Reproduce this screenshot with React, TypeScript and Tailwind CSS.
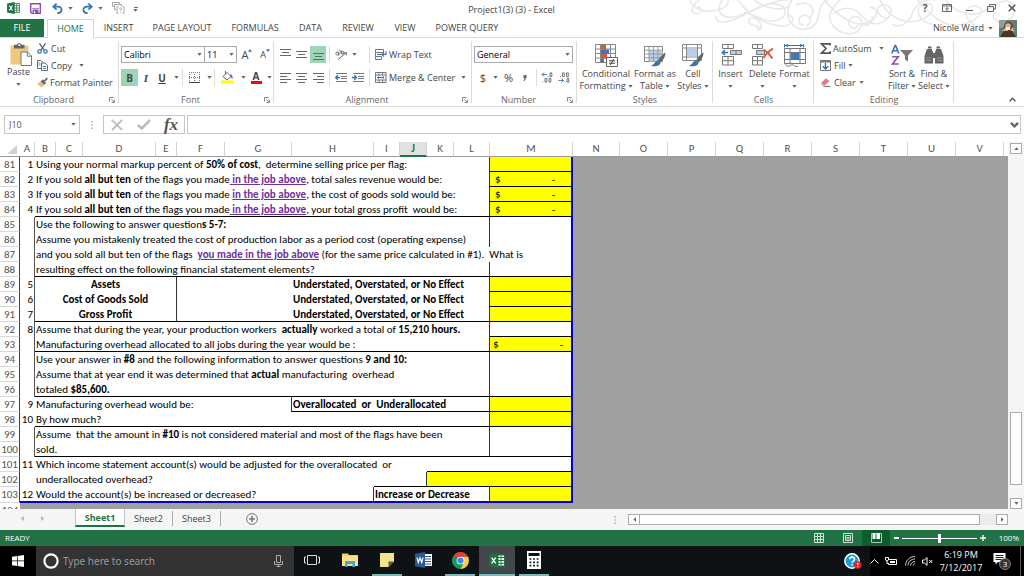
import type { ReactNode } from 'react';

/* ---------- shared pieces ---------- */

function Caret({ className = 'text-[#666]' }: { className?: string }) {
  return (
    <svg viewBox="0 0 5 3" className={`h-[3px] w-[5px] shrink-0 ${className}`} aria-hidden="true">
      <path d="M0.3 0h4.4L2.5 2.7z" fill="currentColor" />
    </svg>
  );
}

function Divider() {
  return <span className="h-[17px] w-px shrink-0 bg-[#dcdcdc]" />;
}

function Slot({ w, label, active, children }: { w: string; label: string; active?: boolean; children: ReactNode }) {
  return (
    <button
      type="button"
      aria-label={label}
      className={`flex h-[17px] shrink-0 items-center justify-center ${w} ${active ? 'bg-[#9fd5b7]' : ''}`}
    >
      {children}
    </button>
  );
}

function Group({ w, label, launcher, children }: { w: string; label: string; launcher?: boolean; children: ReactNode }) {
  return (
    <section className={`relative flex shrink-0 flex-col ${w}`} aria-label={label}>
      <div className="flex-1">{children}</div>
      <div className={`flex h-3 items-center justify-center text-[#666] ${launcher ? 'pr-3' : ''}`}>{label}</div>
      {launcher && (
        <button type="button" aria-label={`${label} settings`} className="absolute right-1 bottom-[3px]">
          <svg viewBox="0 0 6 6" className="h-[6px] w-[6px]" fill="none" stroke="#777" strokeWidth="0.9">
            <path d="M0.5 4.5v-4h4M2.3 2.3l3 3M5.4 2.6v2.9H2.6" />
          </svg>
        </button>
      )}
      <span className="absolute top-[3px] right-0 bottom-[3px] w-px bg-[#dcdcdc]" />
    </section>
  );
}

function BigButton({ w, icon, lines, caretBelow }: { w: string; icon: ReactNode; lines: string[]; caretBelow?: boolean }) {
  return (
    <button type="button" className={`flex shrink-0 flex-col items-center whitespace-nowrap ${w}`}>
      <span className="flex h-[26px] items-center justify-center">{icon}</span>
      {lines.map((line, i) => (
        <span key={line} className="flex items-center gap-[2px] leading-3">
          {line}
          {!caretBelow && i === lines.length - 1 && <Caret />}
        </span>
      ))}
      {caretBelow && (
        <span className="flex h-3 items-center">
          <Caret />
        </span>
      )}
    </button>
  );
}

/* ---------- title bar ---------- */

function ExcelLogo({ className }: { className: string }) {
  return (
    <svg viewBox="0 0 16 15" className={className} aria-hidden="true">
      <rect x="8" y="2" width="7.5" height="11" fill="#fff" stroke="#217346" strokeWidth="1" />
      <path d="M9 4.5h6M9 7.5h6M9 10.3h6M12 2.5v10" stroke="#217346" strokeWidth="1" />
      <path d="M0 1.8L9.5 0v15L0 13.2z" fill="#1e7145" />
      <path d="M2.7 4.6l4 5.8M6.7 4.6l-4 5.8" stroke="#fff" strokeWidth="1.4" />
    </svg>
  );
}

function Flourish() {
  return (
    <svg
      viewBox="0 0 340 37"
      className="pointer-events-none absolute top-0 right-0 h-[37px] w-[340px]"
      fill="none"
      stroke="#e8e8e8"
      strokeWidth="1.6"
      aria-hidden="true"
    >
      <path d="M15 0c-8 7-9 14-2 14 6 0 5-8 0-7" />
      <path d="M6 0c2 8 14 14 28 10C46 7 44 0 44 0" />
      <path d="M38 0C30 14 40 22 60 14S96-2 108 0" />
      <path d="M32 16c0 9 12 7 26 0S80 2 92 4s12 12 2 16-20-4-34-8" />
      <path d="M54 0c10 14 24 24 42 26 14 1 16-10 8-11" />
      <path d="M70 0C82 8 96 12 106 6M78 29c-6-5-14-3-13-9s12 0 12 6-5 4-4 1" />
      <path d="M108 0c-12 18 4 34 18 28s4-24 18-28" />
      <path d="M120 25c-6 0-7-7-2-9 7-3 12 6 4 10M112 5c14-6 22 6 14 12" />
      <path d="M156 0c-8 8-14 16-8 24 5 8 14 11 22 9s10-14 4-16-12 4-8 9 9 1 7-2" />
      <path d="M150 14c8-8 20-8 28 2s18 10 26 2c8-10-2-16-8-12s0 12 8 12" />
      <path d="M140 0c16 18 34 30 48 20 8-6 4-14-2-12" />
      <path d="M196 0c6 14 22 26 40 20S250 0 240 4s-6 18 8 20M208 24c4 4 16 2 20-10S244-2 252 0" />
      <path d="M176 24c8 4 14-2 12-8M234 0c12 14 26 30 46 24s22-18 10-18-10 14 2 20" />
      <path d="M262 0c6 10 22 18 36 12S318-2 326 2s4 18-6 20-14-8-8-10" />
    </svg>
  );
}

function TitleBar() {
  return (
    <header className="relative flex h-[19px] items-center">
      <div className="flex flex-1 items-center pb-[3px] pl-[7px]">
        <ExcelLogo className="h-3 w-[13px]" />
        <button type="button" aria-label="Save" className="ml-[10px]">
          <svg viewBox="0 0 11 11" className="h-[11px] w-[11px]">
            <path d="M0.7 0.7h9.6v9.6H1.9L0.7 9z" fill="#fff" stroke="#8a4fb0" strokeWidth="1.4" />
            <path d="M2 5.7h7M3 7h5v3.5H3z" fill="#8a4fb0" stroke="#8a4fb0" strokeWidth="0.8" />
            <path d="M3.8 8.2h1.4v2H3.8z" fill="#fff" />
          </svg>
        </button>
        <button type="button" aria-label="Undo" className="ml-[11px]">
          <svg viewBox="0 0 11 11" className="h-[11px] w-[11px]" fill="none" stroke="#3472b5" strokeWidth="1.7">
            <path d="M4.6 0.6L1.2 3.7l3.4 3M1.2 3.7h4.6c5.2 0 5 6.3-0.4 6.5" />
          </svg>
        </button>
        <button type="button" aria-label="Undo history" className="ml-1 p-px">
          <Caret />
        </button>
        <button type="button" aria-label="Redo" className="ml-2">
          <svg viewBox="0 0 11 11" className="h-[11px] w-[11px]" fill="none" stroke="#3472b5" strokeWidth="1.7">
            <path d="M6.4 0.6l3.4 3.1-3.4 3M9.8 3.7H5.2c-5.2 0-5 6.3 0.4 6.5" />
          </svg>
        </button>
        <button type="button" aria-label="Redo history" className="ml-1 p-px">
          <Caret />
        </button>
        <button type="button" aria-label="Paste special" className="ml-2">
          <svg viewBox="0 0 13 12" className="h-3 w-[13px]" fill="none" stroke="#a8a8a8" strokeWidth="1">
            <path d="M0.5 0.5h7v2M0.5 0.5v4h2M2.5 2.5h7v2M2.5 2.5v5h2" />
            <path d="M6.5 4.8H5v6.5h1.5M10.5 4.8H12v6.5h-1.5M7.5 7c0-1.5 2-1.3 2 0 0 1-1 0.8-1 1.8M8.5 10v0.8" />
          </svg>
        </button>
        <button type="button" aria-label="Customize toolbar" className="mt-[3px] ml-2 flex flex-col items-center gap-px">
          <span className="h-px w-[4px] bg-[#666]" />
          <Caret />
        </button>
      </div>
      <h1 className="text-[9px] text-[#444]">Project1(3) (3) - Excel</h1>
      <div className="relative flex flex-1 items-center justify-end pr-2 pb-[3px] text-[#555]">
        <button type="button" aria-label="Help" className="w-[22px] text-center text-[10px] leading-[10px] font-bold">
          ?
        </button>
        <button type="button" aria-label="Ribbon display options" className="flex w-[22px] justify-center">
          <svg viewBox="0 0 10 8" className="h-2 w-[10px]" fill="none" stroke="#666" strokeWidth="1">
            <path d="M0.5 0.5h9v7h-9zM0.5 2h9M5 7V4M3.3 5.2L5 3.6l1.7 1.6" />
          </svg>
        </button>
        <button type="button" aria-label="Minimize" className="flex w-[22px] justify-center pt-1">
          <span className="block h-px w-[7px] bg-[#555]" />
        </button>
        <button type="button" aria-label="Restore" className="flex w-[22px] justify-center">
          <svg viewBox="0 0 9 8" className="h-2 w-[9px]" fill="none" stroke="#666" strokeWidth="1">
            <path d="M2.5 2.5v-2h6v4.5h-2M0.5 2.5h6v5h-6z" />
          </svg>
        </button>
        <button type="button" aria-label="Close" className="ml-[6px]">
          <svg viewBox="0 0 8 8" className="h-2 w-2" fill="none" stroke="#555" strokeWidth="1.5">
            <path d="M0.7 0.7l6.6 6.6M7.3 0.7L0.7 7.3" />
          </svg>
        </button>
      </div>
    </header>
  );
}

const ribbonTabs = [
  { name: 'INSERT', w: 'w-[49px]' },
  { name: 'PAGE LAYOUT', w: 'w-[78px]' },
  { name: 'FORMULAS', w: 'w-[68px]' },
  { name: 'DATA', w: 'w-[43px]' },
  { name: 'REVIEW', w: 'w-[52px]' },
  { name: 'VIEW', w: 'w-[42px]' },
  { name: 'POWER QUERY', w: 'w-[82px]' },
];

function TabRow() {
  return (
    <nav className="relative flex h-[18px] text-[9px] text-[#444]">
      <button type="button" className="w-11 bg-[#217346] text-white">
        FILE
      </button>
      <button
        type="button"
        className="relative z-10 -mb-px ml-[3px] w-[47px] border-x border-t border-[#d4d4d4] bg-white text-[#217346]"
      >
        HOME
      </button>
      {ribbonTabs.map((tab) => (
        <button key={tab.name} type="button" className={`whitespace-nowrap ${tab.w}`}>
          {tab.name}
        </button>
      ))}
      <button type="button" className="ml-auto flex items-center gap-1 pr-[7px]">
        Nicole Ward
        <Caret />
        <svg viewBox="0 0 18 17" className="ml-[2px] h-[17px] w-[18px]" aria-hidden="true">
          <rect width="18" height="17" fill="#5d7f78" />
          <path d="M0 0h7v5L3 8H0z" fill="#86a39a" />
          <path d="M5 6c0-5 8-6 9 0l1 6H4z" fill="#6b4530" />
          <circle cx="9" cy="6" r="2.8" fill="#d9b49a" />
          <path d="M1 17l3-5 4-2 5 1 4 6z" fill="#4a352d" />
          <path d="M3 11l4-4 2 4zM11 10l3-3 1.5 5z" fill="#d9b49a" />
          <rect x="7" y="7" width="4" height="3" fill="#f3efe9" />
        </svg>
      </button>
    </nav>
  );
}

/* ---------- ribbon ---------- */

function ClipboardGroup() {
  return (
    <Group w="w-[119px]" label="Clipboard" launcher>
      <div className="flex">
        <button type="button" className="flex w-[37px] flex-col items-center pt-[5px]">
          <svg viewBox="0 0 22 23" className="ml-[4px] h-[23px] w-[22px]">
            <rect x="0.5" y="2.5" width="18" height="19" fill="#edc87e" />
            <path d="M4 1.8h3C7-0.2 11.5-0.2 11.5 1.8h3V5.5H4z" fill="#666" />
            <rect x="8.3" y="1.3" width="2" height="1.6" fill="#fff" />
            <path d="M11 9h6.5l4 4v9.5H11z" fill="#fff" stroke="#777" />
            <path d="M17.3 9v4.2h4.2" fill="none" stroke="#777" />
          </svg>
          <span className="leading-3">Paste</span>
          <span className="flex h-3 items-center">
            <Caret />
          </span>
        </button>
        <div className="flex flex-col pt-[2px]">
          <button type="button" className="flex h-[17px] items-center gap-[3px]">
            <svg viewBox="0 0 11 11" className="h-[11px] w-[11px]" fill="none">
              <path d="M2.5 0.3l4.7 7M8.5 0.3L3.8 7.3" stroke="#666" strokeWidth="1.3" />
              <circle cx="2.5" cy="8.5" r="1.7" stroke="#3472b5" strokeWidth="1.2" />
              <circle cx="8.5" cy="8.5" r="1.7" stroke="#3472b5" strokeWidth="1.2" />
            </svg>
            Cut
          </button>
          <button type="button" className="flex h-[17px] items-center gap-[3px]">
            <svg viewBox="0 0 11 11" className="h-[11px] w-[11px]" fill="#fff" stroke="#666">
              <path d="M0.5 0.5H4l2 2v6H0.5z" />
              <path d="M4.5 3H8l2.5 2.3v5.2h-6z" />
              <path d="M1.5 3h2M1.5 5h2M6 6.5h3M6 8.5h3" stroke="#3472b5" strokeWidth="0.9" />
            </svg>
            Copy
            <span className="pl-1">
              <Caret />
            </span>
          </button>
          <button type="button" className="flex h-[17px] items-center gap-[2px] whitespace-nowrap">
            <svg viewBox="0 0 12 11" className="h-[11px] w-[11px]">
              <path d="M0 6.5L4.5 4l4 4.5L4.5 11z" fill="#edc087" />
              <path d="M4 4.5L6.5 2l3.5 4-2.3 2z" fill="#666" />
              <path d="M7.5 3.5L10.5 0l1.5 1.5-3 3z" fill="#666" />
            </svg>
            Format Painter
          </button>
        </div>
      </div>
    </Group>
  );
}

function FontGroup() {
  return (
    <Group w="w-[155px]" label="Font" launcher>
      <div className="flex items-center pt-2 pl-[2px]">
        <label className="relative flex">
          <select
            aria-label="Font name"
            className="h-[17px] w-[84px] appearance-none border border-[#ababab] bg-white pl-[2px] text-black"
          >
            <option>Calibri</option>
          </select>
          <span className="pointer-events-none absolute top-[7px] right-[3px]">
            <Caret />
          </span>
        </label>
        <label className="relative -ml-px flex">
          <select
            aria-label="Font size"
            className="h-[17px] w-[33px] appearance-none border border-[#ababab] bg-white pl-[2px] text-black"
          >
            <option>11</option>
          </select>
          <span className="pointer-events-none absolute top-[7px] right-[3px]">
            <Caret />
          </span>
        </label>
        <Slot w="w-[20px]" label="Increase font size">
          <span className="text-[11px]">A</span>
          <svg viewBox="0 0 4 3" className="-mt-2 h-[3px] w-1">
            <path d="M0 2.8h4L2 0z" fill="#3472b5" />
          </svg>
        </Slot>
        <Slot w="w-[16px]" label="Decrease font size">
          <span className="text-[9px]">A</span>
          <svg viewBox="0 0 4 3" className="-mt-2 h-[3px] w-1">
            <path d="M0 0.2h4L2 3z" fill="#3472b5" />
          </svg>
        </Slot>
      </div>
      <div className="flex items-center pt-[6px] pl-[2px]">
        <Slot w="w-[17px]" label="Bold" active>
          <b className="text-[10px]">B</b>
        </Slot>
        <Slot w="w-[16px]" label="Italic">
          <i className="font-['Liberation_Serif',serif] text-[11px] font-bold">I</i>
        </Slot>
        <Slot w="w-[16px]" label="Underline">
          <span className="text-[10px] font-bold underline">U</span>
        </Slot>
        <Slot w="w-[12px]" label="Underline styles">
          <Caret />
        </Slot>
        <Divider />
        <Slot w="w-[22px]" label="Borders">
          <svg viewBox="0 0 11 11" className="h-[11px] w-[11px]" stroke="#777" fill="none">
            <path d="M0 0.5h11M0 5.5h11M0.5 2v8M5.5 2v8M10.5 2v8" strokeDasharray="1 1" />
            <path d="M0 10.5h11" stroke="#444" />
          </svg>
        </Slot>
        <Slot w="w-[9px]" label="Border styles">
          <Caret />
        </Slot>
        <Divider />
        <Slot w="w-[24px]" label="Fill color">
          <svg viewBox="0 0 13 13" className="h-[13px] w-[13px]">
            <path d="M2 5.5l4-4 4 4-4 3.5z" fill="#fff" stroke="#666" />
            <path d="M4.5 0v3" stroke="#666" />
            <path d="M9 3.5c2-0.5 3 1.5 2.500 4.500-1.500 0-1-2.500-2-3z" fill="#3472b5" />
            <rect x="0" y="9.500" width="13" height="3.200" fill="#ff0" />
          </svg>
        </Slot>
        <Slot w="w-[8px]" label="Fill color choices">
          <Caret />
        </Slot>
        <Slot w="w-[18px]" label="Font color">
          <span className="flex w-[11px] flex-col items-center border-b-[3px] border-[#f00] text-[10px] leading-[10px] font-bold">
            A
          </span>
        </Slot>
        <Slot w="w-[8px]" label="Font color choices">
          <Caret />
        </Slot>
      </div>
    </Group>
  );
}

function LinesIcon({ d }: { d: string }) {
  return (
    <svg viewBox="0 0 11 11" className="h-[11px] w-[11px]" fill="none" stroke="#666">
      <path d={d} />
    </svg>
  );
}

function IndentIcon({ arrow }: { arrow: string }) {
  return (
    <svg viewBox="0 0 12 9" className="h-[9px] w-3" fill="none">
      <path d="M1 0.5h11M6 3.5h6M6 5.5h6M1 8.5h11" stroke="#777" />
      <path d={arrow} stroke="#3472b5" strokeWidth="1.3" />
    </svg>
  );
}

function AlignmentGroup() {
  return (
    <Group w="w-[198px]" label="Alignment" launcher>
      <div className="flex items-center pt-2 pl-[3px]">
        <Slot w="w-4" label="Top align">
          <LinesIcon d="M0 0.5h11M2 3.5h7M0 6.5h11" />
        </Slot>
        <Slot w="w-[17px]" label="Middle align">
          <LinesIcon d="M0 2.5h11M2 5.5h7M0 8.5h11" />
        </Slot>
        <Slot w="w-4" label="Bottom align" active>
          <LinesIcon d="M0 4.5h11M2 7.5h7M0 10.5h11" />
        </Slot>
        <span className="w-[3px]" />
        <Divider />
        <Slot w="w-[22px]" label="Orientation">
          <svg viewBox="0 0 12 11" className="h-[11px] w-3" fill="none" stroke="#666">
            <circle cx="2.5" cy="4.5" r="1.6" />
            <path d="M4 6.5L3 3M4.2 0.5l3.5 4.2" />
            <circle cx="7.3" cy="3.6" r="1.5" />
            <path d="M3 10.5l8-6.5M8.8 3.7h2.5v2.5" />
          </svg>
        </Slot>
        <Caret />
        <span className="w-3" />
        <Divider />
        <button type="button" className="ml-[5px] flex items-center gap-[2px] whitespace-nowrap">
          <svg viewBox="0 0 12 11" className="h-[11px] w-3" fill="none">
            <path d="M0.5 0.5h8v3h-8zM0.5 7.5h6v3h-6zM0.5 3.5v4" stroke="#777" />
            <path d="M2 5.5h9V2.5M9 3.7L7 5.6l2 1.9" stroke="#3472b5" strokeWidth="1.2" />
          </svg>
          Wrap Text
        </button>
      </div>
      <div className="flex items-center pt-[6px] pl-[3px]">
        <Slot w="w-4" label="Align left">
          <LinesIcon d="M0 1.5h11M0 4.5h7M0 7.5h11M0 10.5h7" />
        </Slot>
        <Slot w="w-[17px]" label="Center">
          <LinesIcon d="M0 1.5h11M2 4.5h7M0 7.5h11M2 10.5h7" />
        </Slot>
        <Slot w="w-4" label="Align right">
          <LinesIcon d="M0 1.5h11M4 4.5h7M0 7.5h11M4 10.5h7" />
        </Slot>
        <span className="w-[3px]" />
        <Divider />
        <Slot w="w-[22px]" label="Decrease indent">
          <IndentIcon arrow="M5 4.5H0.7M2.8 2.3L0.6 4.5l2.2 2.2" />
        </Slot>
        <Slot w="w-3" label="Increase indent">
          <IndentIcon arrow="M0 4.5h4.3M2.3 2.3l2.2 2.2-2.2 2.2" />
        </Slot>
        <span className="w-[5px]" />
        <Divider />
        <button type="button" className="ml-[5px] flex items-center gap-[2px] whitespace-nowrap">
          <svg viewBox="0 0 12 11" className="h-[11px] w-3" fill="none">
            <path d="M0.5 0.5h10.5v10H0.5zM0.5 3h10.5M0.5 8h10.5M4 0.5V3M7.5 0.5V3M4 8v2.5M7.5 8v2.5" stroke="#777" />
            <path d="M2.5 5.5h6.5M3.7 4.3L2.4 5.5l1.3 1.2M7.8 4.3l1.3 1.2-1.3 1.2" stroke="#3472b5" />
          </svg>
          Merge &amp; Center
          <span className="pl-1">
            <Caret />
          </span>
        </button>
      </div>
    </Group>
  );
}

function NumberGroup() {
  return (
    <Group w="w-[105px]" label="Number" launcher>
      <div className="flex pt-2 pr-1 pl-[2px]">
        <label className="relative flex flex-1">
          <select
            aria-label="Number format"
            className="h-[17px] w-full appearance-none border border-[#ababab] bg-white pl-[2px] text-black"
          >
            <option>General</option>
          </select>
          <span className="pointer-events-none absolute top-[7px] right-[3px]">
            <Caret />
          </span>
        </label>
      </div>
      <div className="flex items-center pt-[6px] pl-[3px]">
        <Slot w="w-4" label="Accounting format">
          <span className="text-[11px]">$</span>
        </Slot>
        <Slot w="w-[9px]" label="Currency choices">
          <Caret />
        </Slot>
        <Slot w="w-[17px]" label="Percent style">
          <span className="text-[11px]">%</span>
        </Slot>
        <Slot w="w-4" label="Comma style">
          <svg viewBox="0 0 4 6" className="h-[6px] w-1" fill="#666">
            <path d="M0.5 0h3v2.5L1.5 6H0.5L1.5 3h-1z" />
          </svg>
        </Slot>
        <span className="w-[3px]" />
        <Divider />
        <Slot w="w-[20px]" label="Increase decimal">
          <svg viewBox="0 0 12 11" className="h-[11px] w-3" fill="none" stroke="#666" strokeWidth="0.9">
            <path d="M6 2.5H1M3 0.5L1 2.5l2 2" stroke="#3472b5" />
            <path d="M7 4.2v0.8M9 0.9h1.8v3.7H9zM2 9.5v0.8M4 6.4h1.8v3.7H4zM8 6.4h1.8v3.7H8z" />
          </svg>
        </Slot>
        <Slot w="w-[14px]" label="Decrease decimal">
          <svg viewBox="0 0 12 11" className="h-[11px] w-3" fill="none" stroke="#666" strokeWidth="0.9">
            <path d="M0.5 8.5h5M3.5 6.5l2 2-2 2" stroke="#3472b5" />
            <path d="M2.5 4.2v0.8M4.5 0.9h1.8v3.7H4.5zM8.5 0.9h1.8v3.7H8.5zM7 9.5v0.8M9 6.4h1.8v3.7H9z" />
          </svg>
        </Slot>
      </div>
    </Group>
  );
}

const brush = (
  <>
    <path d="M21.5 8.5c-3 1.5-6 5-7.5 8l2.5 2c2.5-2 5-6 5-10z" fill="#666" />
    <path d="M14 16.5c-3 0.5-3.5 4-7 5.2 3.5 1.3 9 0.8 9.5-3.2z" fill="#3472b5" />
  </>
);

function StylesGroup() {
  return (
    <Group w="w-[136px]" label="Styles">
      <div className="flex pt-1">
        <BigButton
          w="w-[58px]"
          lines={['Conditional', 'Formatting']}
          icon={
            <svg viewBox="0 0 23 23" className="h-[23px] w-[23px]">
              <path d="M0.5 0.5h20v18h-20zM5.5 0.5v18M15.5 0.5v18M0.5 5h20M0.5 9.5h20M0.5 14h20" fill="#fff" stroke="#888" />
              <rect x="6" y="1" width="5" height="4.5" fill="#d9583b" />
              <rect x="6" y="5.5" width="8" height="4.5" fill="#3f77b9" />
              <rect x="6" y="10" width="6" height="4.5" fill="#d9583b" />
              <rect x="6" y="14.5" width="3" height="4" fill="#3f77b9" />
              <path d="M11.5 13.5h11v9h-11z" fill="#fff" stroke="#666" />
              <path d="M14 16.8h6M14 19.2h6M18.7 15l-3.4 6" fill="none" stroke="#444" />
            </svg>
          }
        />
        <BigButton
          w="w-[40px]"
          lines={['Format as', 'Table']}
          icon={
            <svg viewBox="0 0 23 23" className="h-[23px] w-[23px]">
              <path d="M0.5 2.5h18v15h-18z" fill="#fff" stroke="#888" />
              <path d="M5 6.5h13.5v11H5z" fill="#b9d0ea" />
              <path d="M5 2.5v15M9.5 2.5v15M14 2.5v15M0.5 6.2h18M0.5 10h18M0.5 13.8h18" stroke="#999" />
              {brush}
            </svg>
          }
        />
        <BigButton
          w="w-[36px]"
          lines={['Cell', 'Styles']}
          icon={
            <svg viewBox="0 0 23 23" className="h-[23px] w-[23px]">
              <path d="M0.5 0.5h19v16h-19zM4.5 0.5v16M15.5 0.5v16M0.5 4h19M0.5 13h19" fill="#fff" stroke="#888" />
              <path d="M5 4.5h10v8H5z" fill="#b9d0ea" />
              {brush}
            </svg>
          }
        />
      </div>
    </Group>
  );
}

function CellsGroup() {
  return (
    <Group w="w-[101px]" label="Cells">
      <div className="flex pt-1 pl-[2px]">
        <BigButton
          w="w-[31px]"
          lines={['Insert']}
          caretBelow
          icon={
            <svg viewBox="0 0 22 22" className="h-[22px] w-[22px]" fill="#fff" stroke="#777">
              <path d="M2.5 0.5h11v4h-11zM8 0.5v4M2.5 12.5h11v8.5h-11zM8 12.5v8.5M2.5 16.7h11" />
              <path d="M10.5 6.5h11v4h-11zM16 6.5v4" fill="#b9d0ea" />
              <path d="M8 8.5H2.5M5 6L2.3 8.5 5 11" fill="none" stroke="#3472b5" strokeWidth="1.5" />
            </svg>
          }
        />
        <BigButton
          w="w-[33px]"
          lines={['Delete']}
          caretBelow
          icon={
            <svg viewBox="0 0 22 22" className="h-[22px] w-[22px]" fill="#fff" stroke="#777">
              <path d="M0.5 0.5h10v4h-10zM5.5 0.5v4M0.5 12.5h10v8.5h-10zM5.5 12.5v8.5M0.5 16.7h10" />
              <path d="M4.5 6.5h8v4h-8z" fill="#b9d0ea" />
              <path d="M11.5 5.5c4 2.5 7 6 9 9M21 4.5c-4 2.5-7.5 6-9.5 9.5" fill="none" stroke="#d9583b" strokeWidth="2" />
            </svg>
          }
        />
        <BigButton
          w="w-[31px]"
          lines={['Format']}
          caretBelow
          icon={
            <svg viewBox="0 0 22 23" className="h-[23px] w-[22px]" fill="#fff" stroke="#777">
              <path d="M0.5 4.5h21v15h-21zM6 4.5v15M16 4.5v15M0.5 8.5h21M0.5 15.5h21" />
              <path d="M6.5 9h9v6.5h-9z" fill="#3f77b9" stroke="none" />
              <path d="M1 19.5c2 4 4 3 6 1.5s4 2.5 7 1.5" fill="none" />
              <path d="M1 1.5h18M0.5 0v3.5M19.5 0v3.5M4 0L2 1.5 4 3M16 0l2 1.5L16 3" fill="none" stroke="#3472b5" />
            </svg>
          }
        />
      </div>
    </Group>
  );
}

function EditingGroup() {
  return (
    <Group w="w-[140px]" label="Editing">
      <div className="flex">
        <div className="flex w-[70px] flex-col pt-[2px] pl-[6px]">
          <button type="button" className="flex h-[17px] items-center gap-[2px]">
            <svg viewBox="0 0 11 11" className="h-[11px] w-[11px]" fill="none" stroke="#555" strokeWidth="1.7">
              <path d="M10 2.5V0.9H1.5l4.5 4.6-4.5 4.6H10.2V8.3" />
            </svg>
            AutoSum
            <span className="ml-auto">
              <Caret />
            </span>
          </button>
          <button type="button" className="flex h-[17px] items-center gap-[3px]">
            <svg viewBox="0 0 11 11" className="h-[11px] w-[11px]" fill="none">
              <path d="M0.5 0.5h10v10h-10z" stroke="#777" />
              <path d="M0.5 1.5h10" stroke="#777" strokeWidth="2" />
              <path d="M5.5 3v6M2.8 6.2L5.5 9l2.7-2.8" stroke="#3472b5" strokeWidth="1.4" />
            </svg>
            Fill
            <Caret />
          </button>
          <button type="button" className="flex h-[17px] items-center gap-[3px]">
            <svg viewBox="0 0 11 11" className="h-[11px] w-[11px]">
              <path d="M1 6l5-4.8L9.5 4 4.5 8.7z" fill="#e8788c" />
              <path d="M1 6l3.5 2.7-1 0.8L0.5 7z" fill="#f3b4be" />
              <path d="M3.5 9.5h7" stroke="#777" />
            </svg>
            Clear
            <Caret />
          </button>
        </div>
        <div className="flex pt-1 pl-[2px]">
          <BigButton
            w="w-8"
            lines={['Sort &', 'Filter']}
            icon={
              <svg viewBox="0 0 22 22" className="h-[22px] w-[22px]" fill="none">
                <path d="M0.8 9.5L4 1.5h0.6l3.2 8M2 6.8h4.7" stroke="#3472b5" strokeWidth="1.6" />
                <path d="M1.2 12.8h6L1.5 20h6.2" stroke="#8a4fb0" strokeWidth="1.6" />
                <path d="M9 6h13l-5 5.5v6l-3-2v-4z" fill="#777" />
              </svg>
            }
          />
          <BigButton
            w="w-8"
            lines={['Find &', 'Select']}
            icon={
              <svg viewBox="0 0 20 18" className="h-[18px] w-5" fill="#666">
                <path d="M3 3h5v1.5l1 1v12H0.5V10zM12 3h5l2.5 7v7.5H11v-12l1-1zM4 0.5h3.5v2H4zM12.5 0.5H16v2h-3.5zM8.5 7h3v5h-3z" />
                <path d="M2 12h5M13 12h5M2.5 14.5H7M13.5 14.5H18" stroke="#aaa" strokeWidth="0.7" />
              </svg>
            }
          />
        </div>
      </div>
    </Group>
  );
}

function Ribbon() {
  return (
    <div className="relative flex h-[70px] border-y border-[#d8d8d8] bg-white text-[9px] leading-3 text-[#444]">
      <ClipboardGroup />
      <FontGroup />
      <AlignmentGroup />
      <NumberGroup />
      <StylesGroup />
      <CellsGroup />
      <EditingGroup />
      <button type="button" aria-label="Collapse ribbon" className="mt-auto mr-2 mb-1 ml-auto">
        <svg viewBox="0 0 7 5" className="h-[5px] w-[7px]" fill="none" stroke="#555" strokeWidth="1.4">
          <path d="M0.6 4.3L3.5 1.2l2.9 3.1" />
        </svg>
      </button>
    </div>
  );
}

function FormulaBar() {
  return (
    <div className="flex h-[35px] items-start pt-2 pr-[3px] pl-1 text-[10px] text-[#444]">
      <label className="relative flex">
        <input
          aria-label="Name box"
          defaultValue="J10"
          className="h-[19px] w-[76px] border border-[#c6c6c6] bg-white pl-1 text-[9px] text-[#555]"
        />
        <span className="absolute top-2 right-1">
          <Caret />
        </span>
      </label>
      <span className="flex h-[19px] w-[23px] items-center justify-center">
        <svg viewBox="0 0 2 8" className="h-2 w-[2px]" fill="#888">
          <path d="M0.5 0h1v1.5h-1zM0.5 3.2h1v1.5h-1zM0.5 6.4h1V8h-1z" />
        </svg>
      </span>
      <div className="flex h-[19px] w-[82px] items-center border border-[#c6c6c6]">
        <button type="button" aria-label="Cancel" className="flex w-[26px] justify-center">
          <svg viewBox="0 0 12 12" className="h-3 w-3" stroke="#bdbdbd" strokeWidth="1.8" fill="none">
            <path d="M0.8 0.8l10.4 10.4M11 1L1 11" />
          </svg>
        </button>
        <button type="button" aria-label="Enter" className="flex w-[28px] justify-center">
          <svg viewBox="0 0 14 11" className="h-[11px] w-[14px]" stroke="#bdbdbd" strokeWidth="2.6" fill="none">
            <path d="M0.8 6l4 3.5L13 1" />
          </svg>
        </button>
        <button
          type="button"
          aria-label="Insert function"
          className="w-[26px] font-['Liberation_Serif',serif] text-[17px] leading-[17px] font-bold text-[#555] italic"
        >
          fx
        </button>
      </div>
      <label className="relative ml-[2px] flex flex-1">
        <input aria-label="Formula" className="h-[19px] w-full border border-[#c6c6c6] bg-white px-1 text-black" />
        <svg viewBox="0 0 9 6" className="absolute top-[7px] right-[2px] h-[6px] w-[9px]" fill="none" stroke="#666" strokeWidth="2.4">
          <path d="M0.9 0.9l3.6 3.4L8.1 0.9" />
        </svg>
      </label>
    </div>
  );
}

/* ---------- worksheet ---------- */

const columns = [
  { id: 'A', w: 'w-[15px]' },
  { id: 'B', w: 'w-[21px]' },
  { id: 'C', w: 'w-[27px]' },
  { id: 'D', w: 'w-[73px]' },
  { id: 'E', w: 'w-[21px]' },
  { id: 'F', w: 'w-[48px]' },
  { id: 'G', w: 'w-[67px]' },
  { id: 'H', w: 'w-[82px]' },
  { id: 'I', w: 'w-[26px]' },
  { id: 'J', w: 'w-[27px]' },
  { id: 'K', w: 'w-[27px]' },
  { id: 'L', w: 'w-[36px]' },
  { id: 'M', w: 'w-[83px]' },
  { id: 'N', w: 'w-[47px]' },
  { id: 'O', w: 'w-[48px]' },
  { id: 'P', w: 'w-[48px]' },
  { id: 'Q', w: 'w-[48px]' },
  { id: 'R', w: 'w-[48px]' },
  { id: 'S', w: 'w-[48px]' },
  { id: 'T', w: 'w-[48px]' },
  { id: 'U', w: 'w-[48px]' },
  { id: 'V', w: 'w-[48px]' },
];

type Cell = {
  span: number;
  body?: ReactNode;
  fill?: boolean;
  bold?: boolean;
  center?: boolean;
  right?: boolean;
  bottom?: boolean;
};

type Row = { n: number; q?: string; box?: boolean; cells: Cell[] };

function Job({ children }: { children: ReactNode }) {
  return (
    <a href="#job" className="font-bold text-[#7030a0] underline">
      {children}
    </a>
  );
}

function Dash({ wide }: { wide?: boolean }) {
  return (
    <span className={`flex justify-between ${wide ? 'pr-[8px] pl-[2px]' : 'pr-4 pl-[4px]'}`}>
      <span>$</span>
      <span>-</span>
    </span>
  );
}

const effect = 'Understated, Overstated, or No Effect';

const rows: Row[] = [
  {
    n: 81, q: '1',
    cells: [
      { span: 11, right: true, body: <>Using your normal markup percent of <b>50% of cost</b>,  determine selling price per flag:</> },
      { span: 1, fill: true, bottom: true },
    ],
  },
  {
    n: 82, q: '2',
    cells: [
      { span: 11, right: true, body: <>If you sold <b>all but ten</b> of the flags you made<Job> in the job above</Job>, total sales revenue would be:</> },
      { span: 1, fill: true, bottom: true, body: <Dash /> },
    ],
  },
  {
    n: 83, q: '3',
    cells: [
      { span: 11, right: true, body: <>If you sold <b>all but ten</b> of the flags you made <Job>in the job above</Job>, the cost of goods sold would be:</> },
      { span: 1, fill: true, bottom: true, body: <Dash /> },
    ],
  },
  {
    n: 84, q: '4',
    cells: [
      { span: 11, right: true, bottom: true, body: <>If you sold <b>all but ten</b> of the flags you made<Job> in the job above</Job>, your total gross profit  would be:</> },
      { span: 1, fill: true, bottom: true, body: <Dash /> },
    ],
  },
  { n: 85, box: true, cells: [{ span: 11, right: true, body: <>Use the following to answer question<b>s 5-7:</b></> }, { span: 1 }] },
  {
    n: 86, box: true,
    cells: [{ span: 11, right: true, body: 'Assume you mistakenly treated the cost of production labor as a period cost (operating expense)' }, { span: 1 }],
  },
  {
    n: 87, box: true,
    cells: [{ span: 12, body: <>and you sold all but ten of the flags  <Job>you made in the job above</Job> (for the same price calculated in #1).  What is</> }],
  },
  {
    n: 88, box: true,
    cells: [
      { span: 11, right: true, bottom: true, body: 'resulting effect on the following financial statement elements?' },
      { span: 1, bottom: true },
    ],
  },
  {
    n: 89, q: '5', box: true,
    cells: [
      { span: 4, right: true, center: true, bold: true, body: 'Assets' },
      { span: 2 },
      { span: 5, right: true, bold: true, body: effect },
      { span: 1, fill: true, bottom: true },
    ],
  },
  {
    n: 90, q: '6', box: true,
    cells: [
      { span: 4, right: true, center: true, bold: true, body: 'Cost of Goods Sold' },
      { span: 2 },
      { span: 5, right: true, bold: true, body: effect },
      { span: 1, fill: true, bottom: true },
    ],
  },
  {
    n: 91, q: '7', box: true,
    cells: [
      { span: 4, right: true, center: true, bold: true, bottom: true, body: 'Gross Profit' },
      { span: 2, bottom: true },
      { span: 5, right: true, bold: true, bottom: true, body: effect },
      { span: 1, fill: true, bottom: true },
    ],
  },
  {
    n: 92, q: '8', box: true,
    cells: [
      { span: 11, right: true, body: <>Assume that during the year, your production workers  <b>actually</b> worked a total of <b>15,210 hours.</b></> },
      { span: 1, bottom: true },
    ],
  },
  {
    n: 93, box: true,
    cells: [
      { span: 11, right: true, bottom: true, body: 'Manufacturing overhead allocated to all jobs during the year would be :' },
      { span: 1, fill: true, bottom: true, body: <Dash wide /> },
    ],
  },
  {
    n: 94, box: true,
    cells: [{ span: 11, right: true, body: <>Use your answer in <b>#8</b> and the following information to answer questions <b>9 and 10:</b></> }, { span: 1 }],
  },
  {
    n: 95, box: true,
    cells: [{ span: 11, right: true, body: <>Assume that at year end it was determined that <b>actual</b> manufacturing  overhead</> }, { span: 1 }],
  },
  {
    n: 96, box: true,
    cells: [{ span: 11, right: true, bottom: true, body: <>totaled <b>$85,600.</b></> }, { span: 1, bottom: true }],
  },
  {
    n: 97, q: '9',
    cells: [
      { span: 6, right: true, body: 'Manufacturing overhead would be:' },
      { span: 5, right: true, bottom: true, bold: true, body: 'Overallocated  or  Underallocated' },
      { span: 1, fill: true, bottom: true },
    ],
  },
  { n: 98, q: '10', cells: [{ span: 11, right: true, bottom: true, body: 'By how much?' }, { span: 1, fill: true, bottom: true }] },
  {
    n: 99, box: true,
    cells: [{ span: 11, right: true, body: <>Assume  that the amount in <b>#10</b> is not considered material and most of the flags have been</> }, { span: 1 }],
  },
  { n: 100, box: true, cells: [{ span: 11, right: true, bottom: true, body: 'sold.' }, { span: 1, bottom: true }] },
  {
    n: 101, q: '11',
    cells: [
      { span: 9, body: 'Which income statement account(s) would be adjusted for the overallocated  or' },
      { span: 3, bottom: true },
    ],
  },
  {
    n: 102,
    cells: [
      { span: 7, body: 'underallocated overhead?' },
      { span: 2, right: true, bottom: true },
      { span: 3, fill: true, bottom: true },
    ],
  },
  {
    n: 103, q: '12',
    cells: [
      { span: 7, right: true, body: 'Would the account(s) be increased or decreased?' },
      { span: 4, right: true, bold: true, body: 'Increase or Decrease' },
      { span: 1, fill: true },
    ],
  },
];

function Worksheet() {
  return (
    <div className="flex min-h-0 flex-1">
      <div className="min-w-0 flex-1 overflow-hidden bg-[#a0a0a0]">
        <table className="w-full table-fixed border-separate border-spacing-0 font-['Carlito','Calibri','Lato',sans-serif] text-[11px] leading-[12px] whitespace-pre">
          <colgroup>
            <col className="w-5" />
            {columns.map((c) => (
              <col key={c.id} className={c.w} />
            ))}
            <col />
          </colgroup>
          <thead>
            <tr className="h-[15px] bg-white text-[#555]">
              <th className="border-b border-[#999] p-0" aria-label="Select all">
                <svg viewBox="0 0 10 9" className="ml-[7px] h-[9px] w-[10px]" fill="#d0d0d0">
                  <path d="M10 0v9H0z" />
                </svg>
              </th>
              {columns.map((c) => (
                <th
                  key={c.id}
                  scope="col"
                  className={
                    c.id === 'J'
                      ? 'border-r border-b-2 border-r-[#d4d4d4] border-b-[#217346] bg-[#e1e1e1] p-0 font-bold text-[#217346]'
                      : 'border-r border-b border-r-[#d4d4d4] border-b-[#999] p-0 font-normal'
                  }
                >
                  {c.id}
                </th>
              ))}
              <th className="border-b border-[#999] p-0" />
            </tr>
          </thead>
          <tbody className="text-black">
            {rows.map((row, r) => {
              const last = r === rows.length - 1;
              return (
                <tr key={row.n} className="h-[15px] bg-white">
                  <th
                    scope="row"
                    className="h-[15px] border-r border-b border-r-[#3030b0] border-b-[#d9d9d9] px-0 pt-[2px] pb-0 text-center align-top font-normal text-[#555]"
                  >
                    {row.n}
                  </th>
                  <td
                    className={`pt-[2px] pb-0 pl-0 text-right align-top ${row.box ? 'border-r border-r-[#555] pr-[1px]' : 'pr-[2px]'} ${
                      last ? 'border-b-2 border-b-[#0000c8]' : ''
                    }`}
                  >
                    {row.q}
                  </td>
                  {row.cells.map((cell, i) => {
                    const end = i === row.cells.length - 1;
                    return (
                      <td
                        key={i}
                        colSpan={cell.span}
                        className={[
                          'h-[15px] pt-[2px] pr-0 pb-0 align-top',
                          cell.fill ? 'bg-[#ff0]' : '',
                          cell.bold ? 'font-bold' : '',
                          cell.center ? 'pl-0 text-center' : 'pl-[1px]',
                          end ? 'border-r-2 border-r-[#0000c8]' : cell.right ? 'border-r border-r-[#333]' : '',
                          last ? 'border-b-2 border-b-[#0000c8]' : cell.bottom ? 'border-b border-b-black' : '',
                        ].join(' ')}
                      >
                        {cell.body}
                      </td>
                    );
                  })}
                  <td colSpan={10} className="bg-[#a0a0a0] p-0" />
                </tr>
              );
            })}
            <tr className="h-[15px]">
              <th scope="row" className="bg-white px-0 pt-[2px] pb-0 align-top font-normal text-[#555]">
                104
              </th>
              <td colSpan={23} className="p-0" />
            </tr>
          </tbody>
        </table>
      </div>
      <div className="flex w-4 flex-col items-center bg-[#f5f5f5] pt-px">
        <button type="button" aria-label="Scroll up" className="flex h-[11px] w-3 items-center justify-center border border-[#ababab] bg-white">
          <span className="rotate-180">
            <Caret />
          </span>
        </button>
        <div className="flex-1" />
        <div className="h-[73px] w-3 border border-[#ababab] bg-white" />
        <div className="h-[13px]" />
        <button type="button" aria-label="Scroll down" className="flex h-[11px] w-3 items-center justify-center border border-[#ababab] bg-white">
          <Caret />
        </button>
      </div>
    </div>
  );
}

function SheetTabs() {
  return (
    <div className="flex h-[21px] items-start bg-[#f5f5f5] text-[9px] text-[#444]">
      <div className="flex h-[19px] w-[75px] items-center gap-[17px] pl-5">
        <svg viewBox="0 0 4 5" className="h-[5px] w-1" fill="#bbb" aria-hidden="true">
          <path d="M4 0v5L0.5 2.5z" />
        </svg>
        <svg viewBox="0 0 4 5" className="h-[5px] w-1" fill="#bbb" aria-hidden="true">
          <path d="M0 0v5l3.5-2.5z" />
        </svg>
      </div>
      <button
        type="button"
        className="h-[18px] w-[50px] border-x border-b-2 border-x-[#c6c6c6] border-b-[#217346] bg-white pt-[2px] leading-[14px] font-bold text-[#217346]"
      >
        Sheet1
      </button>
      <button type="button" className="mt-[2px] h-[15px] w-12 border-r border-[#ababab] leading-[14px]">
        Sheet2
      </button>
      <button type="button" className="mt-[2px] h-[15px] w-12 border-r border-[#ababab] leading-[14px]">
        Sheet3
      </button>
      <button type="button" aria-label="New sheet" className="mt-1 ml-[25px]">
        <svg viewBox="0 0 12 12" className="h-3 w-3" fill="none" stroke="#777">
          <circle cx="6" cy="6" r="5.4" />
          <path d="M6 3v6M3 6h6" strokeWidth="1.6" />
        </svg>
      </button>
      <div className="mt-[5px] mr-4 ml-auto flex h-[11px] w-5/13 items-center">
        <svg viewBox="0 0 2 8" className="mr-3 h-2 w-[2px]" fill="#888" aria-hidden="true">
          <path d="M0.5 0h1v1.5h-1zM0.5 3.2h1v1.5h-1zM0.5 6.4h1V8h-1z" />
        </svg>
        <button type="button" aria-label="Scroll left" className="flex h-[11px] w-3 items-center justify-center border border-[#ababab] bg-white">
          <span className="rotate-90">
            <Caret />
          </span>
        </button>
        <div className="flex h-[11px] flex-1 bg-[#ececec] pr-4">
          <div className="-ml-px flex-1 border border-[#ababab] bg-white" />
        </div>
        <button type="button" aria-label="Scroll right" className="flex h-[11px] w-3 items-center justify-center border border-[#ababab] bg-white">
          <span className="-rotate-90">
            <Caret />
          </span>
        </button>
      </div>
    </div>
  );
}

function StatusBar() {
  return (
    <div className="flex h-4 items-center bg-[#217346] text-[8px] text-white">
      <span className="pl-[5px]">READY</span>
      <div className="ml-auto flex h-full items-center">
        <button type="button" aria-label="Normal view" className="flex w-7 justify-center">
          <svg viewBox="0 0 10 10" className="h-[10px] w-[10px]" fill="none" stroke="#cfe3d7">
            <path d="M0.5 0.5h9v9h-9zM3.5 0.5v9M6.5 0.5v9M0.5 3.5h9M0.5 6.5h9" />
          </svg>
        </button>
        <button type="button" aria-label="Page layout view" className="flex w-[29px] justify-center">
          <svg viewBox="0 0 10 10" className="h-[10px] w-[10px]" fill="none" stroke="#cfe3d7">
            <path d="M0.5 0.5h9v9h-9zM2.5 2.5h5v5h-5zM3.5 4.5h3M3.5 6h3" />
          </svg>
        </button>
        <button type="button" aria-label="Page break preview" className="flex h-full w-7 items-center justify-center bg-[#0a5f2c]">
          <svg viewBox="0 0 11 10" className="h-[10px] w-[11px]">
            <path d="M0.5 0.5h10v9h-10z" fill="none" stroke="#cfe3d7" strokeWidth="0.8" />
            <path d="M1.5 0h3v6h-3zM5.5 0H9v6H5.500z" fill="#fff" />
          </svg>
        </button>
        <button type="button" aria-label="Zoom out" className="ml-1 h-[2px] w-[5px] bg-white" />
        <input
          type="range"
          aria-label="Zoom"
          defaultValue={50}
          className="ml-[3px] h-4 w-[75px] appearance-none bg-transparent [&::-webkit-slider-runnable-track]:h-px [&::-webkit-slider-runnable-track]:bg-white [&::-webkit-slider-thumb]:-mt-1 [&::-webkit-slider-thumb]:h-[9px] [&::-webkit-slider-thumb]:w-[3px] [&::-webkit-slider-thumb]:appearance-none [&::-webkit-slider-thumb]:bg-white"
        />
        <button type="button" aria-label="Zoom in" className="ml-[3px]">
          <svg viewBox="0 0 6 6" className="h-[6px] w-[6px]" stroke="#fff" strokeWidth="1.4">
            <path d="M3 0v6M0 3h6" />
          </svg>
        </button>
        <span className="w-[38px] pr-[5px] text-right">100%</span>
      </div>
    </div>
  );
}

/* ---------- taskbar ---------- */

function TaskButton({ w, label, running, active, children }: { w: string; label: string; running?: boolean; active?: boolean; children: ReactNode }) {
  return (
    <button
      type="button"
      aria-label={label}
      className={`flex h-[30px] items-center justify-center border-b-2 ${w} ${running ? 'border-[#76b9bd]' : 'border-transparent'} ${
        active ? 'bg-[#42474a]' : ''
      }`}
    >
      {children}
    </button>
  );
}

function Taskbar() {
  return (
    <footer className="flex h-[30px] shrink-0 items-center bg-[#0f1214] text-[9px] text-white">
      <button type="button" aria-label="Start" className="flex h-full w-9 items-center justify-center bg-black">
        <svg viewBox="0 0 12 12" className="h-3 w-3" fill="#fff">
          <path d="M0 1.7L5.2 1v4.6H0zM5.9 0.9L12 0v5.6H5.9zM0 6.3h5.2v4.6L0 10.2zM5.9 6.3H12V12l-6.1-0.9z" />
        </svg>
      </button>
      <label className="flex h-full w-[258px] items-center bg-[#333] pl-[7px]">
        <svg viewBox="0 0 16 16" className="h-4 w-4" fill="none" stroke="#fff" strokeWidth="2.2">
          <circle cx="8" cy="8" r="6.6" />
        </svg>
        <input
          aria-label="Search"
          placeholder="Type here to search"
          className="ml-1 w-0 flex-1 bg-transparent font-['Noto_Sans',sans-serif] text-[10px] placeholder:text-[#999]"
        />
        <svg viewBox="0 0 9 12" className="mr-[11px] h-3 w-[9px]" fill="none" stroke="#aaa">
          <path d="M2.5 0.5h4v7h-4zM0.5 6v3.5h8V6M4.5 9.5v2M2.5 11.5h4" />
        </svg>
      </label>
      <TaskButton w="w-9" label="Task view">
        <svg viewBox="0 0 16 10" className="h-[10px] w-4" fill="none" stroke="#ddd">
          <path d="M3.5 0.5h9v9h-9zM2 2H0.5v6H2M14 2h1.5v6H14" />
        </svg>
      </TaskButton>
      <TaskButton w="w-10" label="File Explorer">
        <svg viewBox="0 0 16 14" className="h-[14px] w-4">
          <path d="M0 0.5h6l1 1.5h9v11H0z" fill="#f5cf62" />
          <path d="M0 3h16v10H0z" fill="#fce08a" />
          <path d="M3 8h10v6h-2.5v-3h-5v3H3z" fill="#39a9e0" />
        </svg>
      </TaskButton>
      <span className="w-[2px]" />
      <TaskButton w="w-[30px]" label="Sticky Notes" running>
        <svg viewBox="0 0 14 14" className="h-[14px] w-[14px]">
          <path d="M0 0h14v8.5L8.5 14H0z" fill="#f3e38e" />
          <path d="M8.5 14V8.5H14z" fill="#5e5839" />
        </svg>
      </TaskButton>
      <TaskButton w="w-[43px]" label="Word">
        <svg viewBox="0 0 17 16" className="h-4 w-[17px]">
          <rect x="8" y="2" width="9" height="12" fill="#fff" />
          <path d="M10 4.5h6M10 7h6M10 9.5h6M10 12h6" stroke="#2b579a" />
          <path d="M0 1.8L10 0v16L0 14.2z" fill="#2b579a" />
          <path d="M2 5.5l1.3 5L5 6l1.7 4.5L8 5.5" fill="none" stroke="#fff" strokeWidth="1.2" />
        </svg>
      </TaskButton>
      <TaskButton w="w-[30px]" label="Chrome" running>
        <svg viewBox="0 0 18 18" className="h-[17px] w-[17px]">
          <path d="M9 9L1.2 4.5A9 9 0 0 1 16.8 4.5L17 5H9z" fill="#db4437" />
          <path d="M9 9L1.2 4.5A9 9 0 0 0 9 18l4-7z" fill="#0f9d58" />
          <path d="M9 18A9 9 0 0 0 17 5H9l3.5 6z" fill="#ffcd40" />
          <circle cx="9" cy="9" r="4.1" fill="#fff" />
          <circle cx="9" cy="9" r="3.3" fill="#4285f4" />
        </svg>
      </TaskButton>
      <span className="w-1" />
      <TaskButton w="w-9" label="Excel" running active>
        <ExcelLogo className="h-[15px] w-4" />
      </TaskButton>
      <span className="w-1" />
      <TaskButton w="w-[30px]" label="Calculator" running>
        <svg viewBox="0 0 14 18" className="h-[18px] w-[14px]">
          <rect width="14" height="18" fill="#fff" />
          <path d="M1.5 2h11v3h-11z" fill="#111" />
          <path d="M2.5 8h9M2.5 11.3h9M2.5 14.6h9" stroke="#111" strokeWidth="1.7" strokeDasharray="1.8 1.8" />
        </svg>
      </TaskButton>
      <div className="ml-auto flex h-full items-center">
        <svg viewBox="0 0 18 16" className="h-4 w-[18px]" aria-hidden="true">
          <circle cx="8" cy="8" r="7.2" fill="#1b9ad6" stroke="#fff" strokeWidth="1.5" />
          <path d="M5.7 6.2c0-3 4.8-3 4.8 0 0 1.8-2.4 1.8-2.4 3.6M8.1 11v1.6" fill="none" stroke="#fff" strokeWidth="1.5" />
          <circle cx="13.8" cy="12" r="3.8" fill="#e02020" />
          <path d="M13.8 9.7v2.6M13.8 13.2v1" stroke="#fff" strokeWidth="1.2" />
        </svg>
        <div className="ml-2 flex h-full items-center bg-black">
          <svg viewBox="0 0 9 5" className="h-[5px] w-[9px]" fill="none" stroke="#fff" aria-hidden="true">
            <path d="M0.5 4.5l4-4 4 4" />
          </svg>
          <svg viewBox="0 0 12 9" className="ml-[6px] h-[9px] w-3" fill="none" stroke="#fff" aria-hidden="true">
            <path d="M3.5 2.5h8v5h-8V6M0.5 0.5h3v2.5l-1.5 1-1.5-1zM2 4v2.5h1.5" />
            <path d="M5 4h5v2H5z" fill="#fff" stroke="none" />
          </svg>
          <svg viewBox="0 0 11 10" className="ml-2 h-[10px] w-[11px]" fill="none" stroke="#ccc" aria-hidden="true">
            <path d="M0.5 9.5C0.5 4.5 5 0.5 10 0.5M3 9.5C3 6 6 3 10 3M5.5 9.5C5.5 7.5 7.5 5.5 10 5.5M8 9.5c0-1 1-1.8 2-1.8" />
          </svg>
          <svg viewBox="0 0 11 9" className="ml-[6px] h-[9px] w-[11px]" fill="none" stroke="#fff" aria-hidden="true">
            <path d="M0.5 3h2L5 0.6v7.8L2.5 6h-2zM7.3 3l3 3M10.3 3l-3 3" />
          </svg>
          <time className="flex w-[56px] flex-col items-center leading-[13px]">
            <span>6:19 PM</span>
            <span>7/12/2017</span>
          </time>
          <button type="button" aria-label="Notifications" className="ml-1">
            <svg viewBox="0 0 18 18" className="h-[18px] w-[18px]">
              <path d="M0.5 1h12v9H5l-2.5 2.5V10h-2z" fill="#fff" />
              <path d="M2.5 3.5h8M2.5 5.5h8M2.5 7.5h8" stroke="#222" />
              <circle cx="12" cy="12" r="5.5" fill="#333" stroke="#999" strokeWidth="0.8" />
              <text x="12" y="15" textAnchor="middle" fontSize="8" fontFamily="Open Sans, sans-serif" fill="#fff">
                3
              </text>
            </svg>
          </button>
          <span className="mr-[3px] ml-[9px] h-full w-px bg-[#555]" />
        </div>
      </div>
    </footer>
  );
}

export default function App() {
  return (
    <div className="relative flex h-screen flex-col overflow-hidden bg-white font-['Open_Sans',sans-serif]">
      <Flourish />
      <TitleBar />
      <TabRow />
      <Ribbon />
      <FormulaBar />
      <Worksheet />
      <SheetTabs />
      <StatusBar />
      <Taskbar />
    </div>
  );
}
